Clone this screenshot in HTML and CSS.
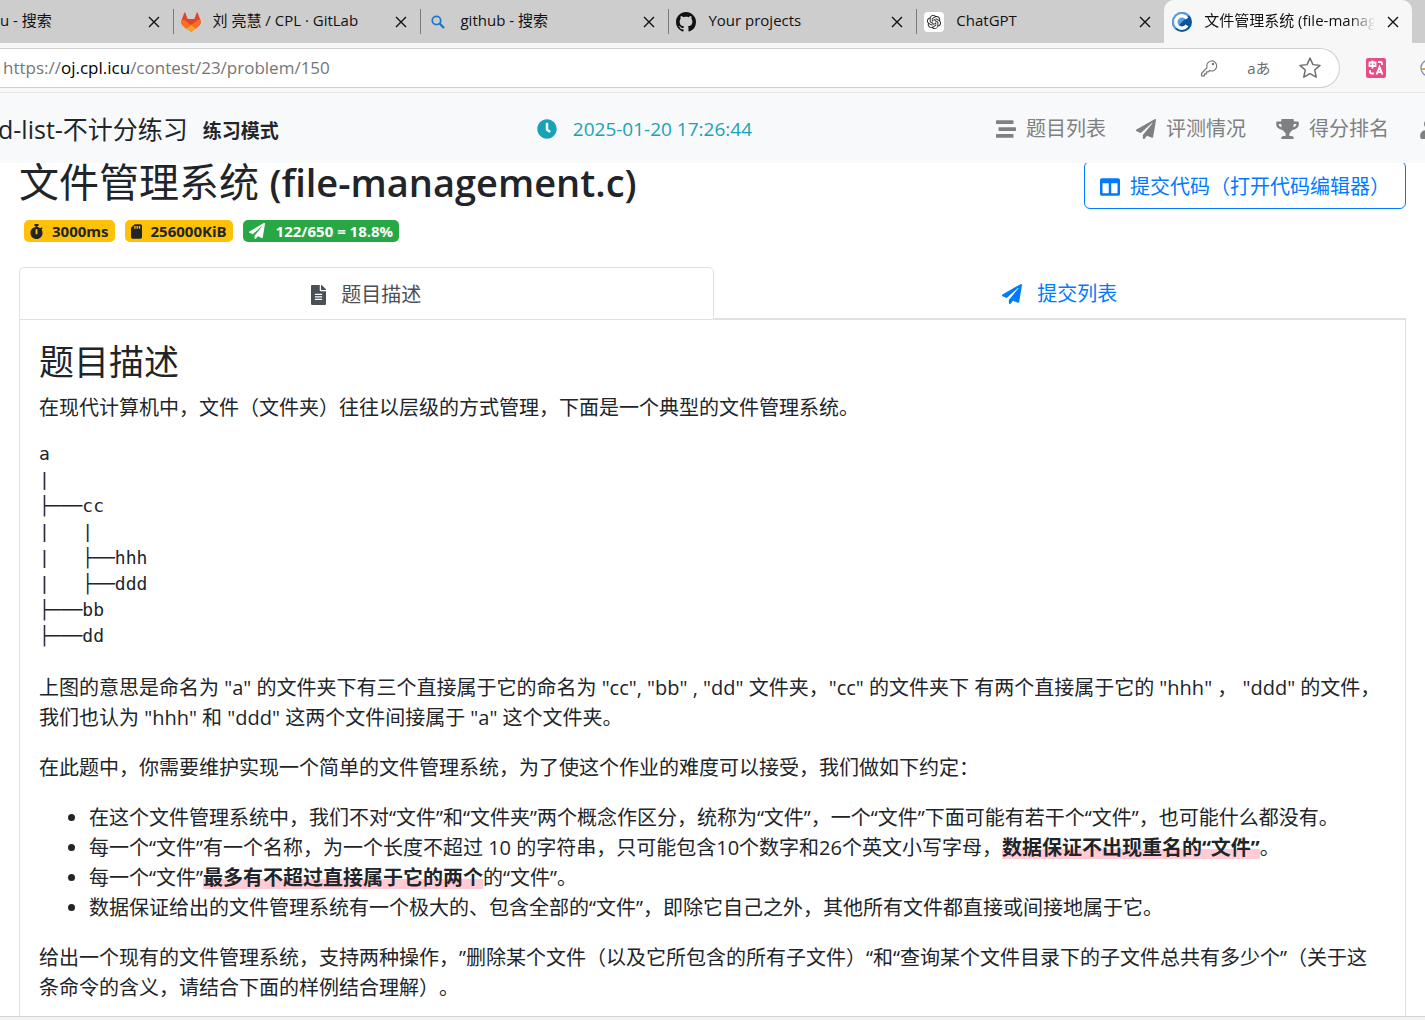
FILE: index.html
```html
<!DOCTYPE html>
<html lang="zh-CN">
<head>
<meta charset="utf-8">
<title>文件管理系统 (file-management.c)</title>
<link rel="stylesheet" href="styles.css">
</head>
<body>
<svg class="sprite" aria-hidden="true">
  <symbol id="close" viewBox="0 0 12 12"><path d="M1 1l10 10M11 1L1 11" stroke="currentColor" stroke-width="1.4" fill="none"/></symbol>
  <symbol id="plane" viewBox="0 0 512 512"><path d="M476 3.2L12.5 270.6c-18.1 10.4-15.8 35.6 2.2 43.2L121 358.4l287.3-253.2c5.5-4.9 13.3 2.6 8.6 8.3L176 407v80.5c0 23.6 28.5 32.9 42.5 15.8L282 426l124.6 52.2c14.2 6 30.4-2.9 33-18.2l72-432C515 7.8 493.3-6.8 476 3.2z"/></symbol>
</svg>

<div class="tabs">
  <div class="tab first"><span class="tab-title">u - 搜索</span><button class="close" aria-label="关闭"><svg><use href="#close"/></svg></button></div>
  <div class="tab">
    <svg class="favicon" viewBox="0 0 20 20"><path d="M3.2 1 .8 7.6C-.2 10 .3 12.300 2 13.800L10 19.700l8-5.900c1.700-1.500 2.200-3.800 1.200-6.200L16.800 1c-.3-.6-1-.6-1.200 0L13.300 7H6.700L4.400 1c-.2-.6-.9-.6-1.200 0z" fill="#e24329"/><path d="M19.200 7.600c-2 .3-3.500 1.200-5 2.300L10 13l5 3.900 3-3.100c1.700-1.500 2.200-3.800 1.200-6.200zM.8 7.600c2 .3 3.500 1.200 5 2.300L10 13l-5 3.900-3-3.100C.3 12.300-.2 10 .8 7.600z" fill="#fc6d26"/><path d="m10 13 4.500 3.400L10 19.700l-4.500-3.300z" fill="#fca326"/></svg>
    <span class="tab-title">刘 亮慧 / CPL · GitLab</span><button class="close" aria-label="关闭"><svg><use href="#close"/></svg></button></div>
  <div class="tab">
    <svg class="favicon" viewBox="0 0 20 20"><circle cx="8.500" cy="8.500" r="4.200" fill="none" stroke="#1a78d0" stroke-width="1.800"/><path d="m11.700 11.700 4.300 4.300" stroke="#1a78d0" stroke-width="2.400"/></svg>
    <span class="tab-title">github - 搜索</span><button class="close" aria-label="关闭"><svg><use href="#close"/></svg></button></div>
  <div class="tab">
    <svg class="favicon" viewBox="0 0 16 16" fill="#24292f"><path d="M8 0C3.580 0 0 3.580 0 8c0 3.540 2.290 6.530 5.470 7.590.4.070.55-.17.55-.38 0-.19-.01-.82-.01-1.490-2.010.37-2.530-.49-2.690-.94-.09-.23-.48-.94-.82-1.130-.28-.15-.68-.52-.01-.53.63-.01 1.080.58 1.230.82.72 1.210 1.870.87 2.330.66.070-.52.28-.87.51-1.070-1.780-.2-3.640-.89-3.640-3.950 0-.87.31-1.590.82-2.150-.08-.2-.36-1.020.08-2.120 0 0 .67-.21 2.200.82.64-.18 1.320-.27 2-.27s1.360.09 2 .27c1.530-1.040 2.200-.82 2.200-.82.44 1.100.16 1.920.08 2.120.51.56.82 1.270.82 2.150 0 3.070-1.870 3.750-3.650 3.950.29.25.54.73.54 1.480 0 1.070-.01 1.930-.01 2.200 0 .21.15.46.55.38A8.010 8.010 0 0 0 16 8c0-4.420-3.580-8-8-8z"/></svg>
    <span class="tab-title">Your projects</span><button class="close" aria-label="关闭"><svg><use href="#close"/></svg></button></div>
  <div class="tab">
    <svg class="favicon" viewBox="0 0 34 34"><rect width="34" height="34" rx="7" fill="#fff"/><path transform="translate(5 5)" fill="#222" d="M22.282 9.821a5.985 5.985 0 0 0-.516-4.910 6.046 6.046 0 0 0-6.510-2.900A6.065 6.065 0 0 0 4.981 4.182a5.985 5.985 0 0 0-3.998 2.900 6.046 6.046 0 0 0 .743 7.097 5.980 5.980 0 0 0 .51 4.911 6.051 6.051 0 0 0 6.515 2.900A5.985 5.985 0 0 0 13.260 24a6.056 6.056 0 0 0 5.772-4.206 5.990 5.990 0 0 0 3.998-2.900 6.056 6.056 0 0 0-.748-7.073zM13.260 22.430a4.476 4.476 0 0 1-2.876-1.040l.141-.081 4.779-2.758a.795.795 0 0 0 .392-.681v-6.737l2.020 1.168a.071.071 0 0 1 .038.052v5.583a4.504 4.504 0 0 1-4.494 4.494zM3.600 18.304a4.470 4.470 0 0 1-.535-3.014l.142.085 4.783 2.759a.771.771 0 0 0 .780 0l5.843-3.369v2.332a.080.080 0 0 1-.033.062L9.740 19.950a4.500 4.500 0 0 1-6.140-1.646zM2.341 7.896a4.485 4.485 0 0 1 2.365-1.973V11.600a.766.766 0 0 0 .388.677l5.815 3.354-2.020 1.169a.076.076 0 0 1-.071 0l-4.830-2.787A4.504 4.504 0 0 1 2.341 7.872zm16.597 3.855-5.833-3.387L15.119 7.200a.076.076 0 0 1 .071 0l4.830 2.791a4.494 4.494 0 0 1-.676 8.105v-5.678a.790.790 0 0 0-.407-.667zm2.010-3.023-.141-.085-4.774-2.782a.776.776 0 0 0-.785 0L9.409 9.230V6.897a.066.066 0 0 1 .028-.061l4.830-2.787a4.499 4.499 0 0 1 6.680 4.660zM8.307 12.863l-2.020-1.164a.080.080 0 0 1-.038-.057V6.074a4.499 4.499 0 0 1 7.376-3.453l-.142.080L8.704 5.460a.795.795 0 0 0-.393.681zm1.097-2.365 2.602-1.500 2.607 1.500v2.999l-2.597 1.500-2.607-1.500z"/></svg>
    <span class="tab-title">ChatGPT</span><button class="close" aria-label="关闭"><svg><use href="#close"/></svg></button></div>
  <div class="tab active">
    <svg class="favicon" viewBox="0 0 20 20"><circle cx="10" cy="10" r="10" fill="#0b559f"/><path d="M2.900 17.100A10 10 0 0 1 17.100 2.900z" fill="#5c9fdc"/><path d="M15 6.400a6.200 6.200 0 1 0 0 7.200" fill="none" stroke="#fff" stroke-width="3.400"/></svg>
    <span class="tab-title">文件管理系统 (file-management.c)</span><button class="close" aria-label="关闭"><svg><use href="#close"/></svg></button></div>
  <div class="tab-rest"></div>
</div>

<div class="toolbar">
  <div class="address">
    <div class="url">https://<b>oj.cpl.icu</b>/contest/23/problem/150</div>
    <svg class="tool" viewBox="0 0 20 20"><path d="M2.500 15.500v2.300h3v-1.900h2v-2h1.800l1.300-1.400A5 5 0 1 0 8 9.600z" fill="none" stroke="#767676" stroke-width="1.200" stroke-linejoin="round"/><circle cx="14" cy="6" r="1.200" fill="#767676"/></svg>
    <button class="reader" aria-label="翻译">aあ</button>
    <svg class="tool" viewBox="0 0 20 20"><path d="m10 1 2.700 5.900 6.400.7-4.800 4.300 1.400 6.400L10 15.100l-5.700 3.200 1.400-6.400L.9 7.600l6.400-.7z" fill="none" stroke="#6b6b6b" stroke-width="1.300" stroke-linejoin="round"/></svg>
  </div>
  <svg class="ext" viewBox="0 0 20 20"><rect width="20" height="20" rx="2" fill="#ea4c89"/><path d="M3.500 4.500h6v3.500h-6zM6.500 2.500v8M12 4h2.500q1.500 0 1.500 1.500V7M4 12v2q0 1.500 1.500 1.500H8M10.500 16.500 13.500 9l3 7.500M11.500 14.200h4" fill="none" stroke="#fff" stroke-width="1.800"/></svg>
  <svg class="ext last" viewBox="0 0 20 20"><circle cx="9" cy="10" r="8" fill="#fff" stroke="#8097b5" stroke-width="1.500"/><path d="M2 11h6" stroke="#e8a33d" stroke-width="2"/></svg>
</div>

<div class="page">
  <nav class="navbar">
    <div class="brand"><span class="contest">d-list-不计分练习</span><strong>练习模式</strong></div>
    <div class="clock"><svg viewBox="0 0 512 512"><path d="M256 8C119 8 8 119 8 256s111 248 248 248 248-111 248-248S393 8 256 8zm92.490 313-20 25a16 16 0 0 1-22.490 2.500l-67-49.720a40 40 0 0 1-15-31.230V112a16 16 0 0 1 16-16h32a16 16 0 0 1 16 16v144l58 42.500a16 16 0 0 1 2.490 22.500z"/></svg><time>2025-01-20 17:26:44</time></div>
    <div class="links">
      <a href="#list"><svg viewBox="0 0 512 512"><path d="M16 128h416c8.840 0 16-7.160 16-16V48c0-8.840-7.160-16-16-16H16C7.160 32 0 39.160 0 48v64c0 8.840 7.160 16 16 16zm480 80H80c-8.840 0-16 7.160-16 16v64c0 8.840 7.160 16 16 16h416c8.840 0 16-7.160 16-16v-64c0-8.840-7.160-16-16-16zm-64 176H16c-8.840 0-16 7.160-16 16v64c0 8.840 7.160 16 16 16h416c8.840 0 16-7.160 16-16v-64c0-8.840-7.160-16-16-16z"/></svg>题目列表</a>
      <a href="#status"><svg><use href="#plane"/></svg>评测情况</a>
      <a href="#rank"><svg class="wide" viewBox="0 0 576 512"><path d="M552 64H448V24c0-13.300-10.700-24-24-24H152c-13.300 0-24 10.700-24 24v40H24C10.700 64 0 74.700 0 88v56c0 35.700 22.500 72.400 61.900 100.700 31.500 22.700 69.800 37.100 110 41.700C203.300 338.500 240 360 240 360v72h-48c-35.300 0-64 20.700-64 56v12c0 6.600 5.400 12 12 12h296c6.600 0 12-5.400 12-12v-12c0-35.300-28.700-56-64-56h-48v-72s36.700-21.500 68.100-73.600c40.300-4.600 78.600-19 110-41.700 39.300-28.300 61.900-65 61.900-100.700V88c0-13.300-10.700-24-24-24zM99.300 192.800C74.900 175.200 64 155.600 64 144v-16h64.200c1 32.600 5.800 61.200 12.800 86.200-15.100-5.200-29.200-12.400-41.700-21.400zM512 144c0 16.100-17.700 36.100-35.300 48.800-12.500 9-26.700 16.200-41.800 21.400 7-25 11.800-53.600 12.800-86.200H512v16z"/></svg>得分排名</a>
      <a href="#user" aria-label="用户"><svg viewBox="0 0 448 512"><path d="M224 256c70.700 0 128-57.300 128-128S294.700 0 224 0 96 57.300 96 128s57.300 128 128 128zm89.600 32h-16.700c-22.200 10.200-46.900 16-72.900 16s-50.600-5.800-72.900-16h-16.700C60.200 288 0 348.200 0 422.400V464c0 26.500 21.500 48 48 48h352c26.500 0 48-21.500 48-48v-41.600c0-74.200-60.200-134.400-134.400-134.400z"/></svg></a>
    </div>
  </nav>

  <main class="viewport"><div class="problem">
    <header class="head">
      <div>
        <h1>文件管理系统 <span>(file-management.c)</span></h1>
        <div class="badges">
          <span class="badge warn"><svg class="watch" viewBox="0 0 448 512"><path d="M432 304c0 114.900-93.100 208-208 208S16 418.900 16 304c0-104 76.300-190.200 176-205.500V64h-28c-6.600 0-12-5.400-12-12V12c0-6.600 5.400-12 12-12h120c6.600 0 12 5.400 12 12v40c0 6.600-5.400 12-12 12h-28v34.500c37.500 5.800 71.700 21.600 99.700 44.600l27.500-27.500c4.700-4.700 12.300-4.700 17 0l28.300 28.300c4.700 4.700 4.700 12.300 0 17l-30 30C419.700 223.300 432 262.200 432 304zm-176 36V188.500c0-6.600-5.400-12-12-12h-40c-6.600 0-12 5.400-12 12V340c0 6.600 5.400 12 12 12h40c6.600 0 12-5.400 12-12z"/></svg>3000ms</span>
          <span class="badge warn"><svg class="card-icon" viewBox="0 0 384 512"><path d="M320 0H128L0 128v320c0 35.300 28.700 64 64 64h256c35.300 0 64-28.700 64-64V64c0-35.300-28.700-64-64-64zM160 160h-48V64h48v96zm80 0h-48V64h48v96zm80 0h-48V64h48v96z"/></svg>256000KiB</span>
          <span class="badge ok"><svg><use href="#plane"/></svg>122/650 = 18.8%</span>
        </div>
      </div>
      <button class="submit"><svg viewBox="0 0 512 512"><path d="M464 32H48C21.490 32 0 53.490 0 80v352c0 26.510 21.490 48 48 48h416c26.510 0 48-21.490 48-48V80c0-26.510-21.490-48-48-48zM224 416H64V160h160v256zm224 0H288V160h160v256z"/></svg>提交代码（打开代码编辑器）</button>
    </header>

    <div class="switch">
      <a class="current" href="#desc"><svg class="narrow" viewBox="0 0 384 512"><path d="M224 136V0H24C10.700 0 0 10.700 0 24v464c0 13.300 10.700 24 24 24h336c13.300 0 24-10.700 24-24V160H248c-13.200 0-24-10.800-24-24zm64 236c0 6.600-5.400 12-12 12H108c-6.600 0-12-5.400-12-12v-8c0-6.600 5.400-12 12-12h168c6.600 0 12 5.400 12 12v8zm0-64c0 6.600-5.400 12-12 12H108c-6.600 0-12-5.400-12-12v-8c0-6.600 5.400-12 12-12h168c6.600 0 12 5.400 12 12v8zm0-72v8c0 6.600-5.400 12-12 12H108c-6.600 0-12-5.400-12-12v-8c0-6.600 5.400-12 12-12h168c6.600 0 12 5.400 12 12zm96-114.100v6.100H256V0h6.100c6.400 0 12.500 2.500 17 7l97.900 98c4.500 4.500 7 10.600 7 16.900z"/></svg>题目描述</a>
      <a href="#submissions"><svg><use href="#plane"/></svg>提交列表</a>
    </div>

    <article class="card">
      <h2>题目描述</h2>
      <p>在现代计算机中，文件（文件夹）往往以层级的方式管理，下面是一个典型的文件管理系统。</p>
<pre>a
|
├───cc
|   |
|   ├──hhh
|   ├──ddd
├───bb
├───dd</pre>
      <p>上图的意思是命名为 "a" 的文件夹下有三个直接属于它的命名为 "cc", "bb" , "dd" 文件夹，"cc" 的文件夹下 有两个直接属于它的 "hhh" ， "ddd" 的文件，我们也认为 "hhh" 和 "ddd" 这两个文件间接属于 "a" 这个文件夹。</p>
      <p>在此题中，你需要维护实现一个简单的文件管理系统，为了使这个作业的难度可以接受，我们做如下约定：</p>
      <ul>
        <li>在这个文件管理系统中，我们不对“文件”和“文件夹”两个概念作区分，统称为“文件”，一个“文件”下面可能有若干个“文件”，也可能什么都没有。</li>
        <li>每一个“文件”有一个名称，为一个长度不超过 10 的字符串，只可能包含10个数字和26个英文小写字母，<strong>数据保证不出现重名的“文件”</strong>。</li>
        <li>每一个“文件”<strong>最多有不超过直接属于它的两个</strong>的“文件”。</li>
        <li>数据保证给出的文件管理系统有一个极大的、包含全部的“文件”，即除它自己之外，其他所有文件都直接或间接地属于它。</li>
      </ul>
      <p>给出一个现有的文件管理系统，支持两种操作，”删除某个文件（以及它所包含的所有子文件）“和“查询某个文件目录下的子文件总共有多少个”（关于这条命令的含义，请结合下面的样例结合理解）。</p>
    </article>
  </div></main>
</div>
<footer class="frame"></footer>
</body>
</html>
```
FILE: styles.css
```css
* { box-sizing: border-box; }
body {
  margin: 0;
  height: 100vh;
  display: flex;
  flex-direction: column;
  overflow: hidden;
  background: #fff;
  color: #212529;
  font: 20px/30px "Open Sans", "Noto Sans CJK SC", sans-serif;
  text-spacing-trim: space-all;
}
button { font: inherit; color: inherit; background: none; border: 0; padding: 0; }
svg { fill: currentColor; flex: none; }
a { color: inherit; text-decoration: none; }
.sprite { display: none; }

/* browser tabs */
.tabs { display: flex; height: 43px; flex: none; background: #f7f7f7; color: #111; font-size: 15px; line-height: 20px; }
.tab {
  flex: 495 1 0;
  min-width: 0;
  display: flex;
  align-items: center;
  gap: 12px;
  padding: 0 13px 0 8px;
  background: #cdcdcd;
  background-image: linear-gradient(#7a7a7a, #7a7a7a);
  background-size: 1px 25px;
  background-position: 0 9px;
  background-repeat: no-repeat;
}
.tab.first { flex-grow: 348; padding-left: 0; background-image: none; }
.tab:nth-child(5) { border-bottom-right-radius: 10px; }
.tab.active { background: #f7f7f7; border-radius: 10px 10px 0 0; box-shadow: 0 -10px 0 10px #cdcdcd; }
.tab-rest { flex: 28 1 0; background: #cdcdcd; border-bottom-left-radius: 10px; }
.favicon { width: 20px; height: 20px; }
.tab-title { flex: 1; overflow: hidden; white-space: nowrap; padding-bottom: 3px; }
.active .tab-title { mask-image: linear-gradient(to right, #000 85%, transparent); }
.close { width: 12px; height: 12px; }
.close svg { display: block; width: 12px; height: 12px; }

/* address bar */
.toolbar { display: flex; align-items: center; gap: 26px; height: 50px; flex: none; background: #f7f7f7; border-bottom: 1px solid #e8e8e8; overflow: hidden; }
.address {
  flex: none;
  width: 94%;
  height: 40px;
  display: flex;
  align-items: center;
  gap: 28px;
  padding: 0 18px 0 3px;
  background: #fff;
  border: 1px solid #cfcfcf;
  border-left: 0;
  border-radius: 0 20px 20px 0;
}
.url { flex: 1; font-size: 17px; color: #767676; }
.url b { font-weight: 400; color: #000; }
.ext { width: 20px; height: 20px; }
.ext.last { margin-left: 8px; }
.tool { width: 22px; height: 22px; }
.tool:first-of-type { width: 20px; height: 20px; }
.reader { font-size: 15px; color: #6b6b6b; }

/* contest navigation */
.page { flex: 1; min-height: 0; display: flex; flex-direction: column; }
.navbar { height: 70px; flex: none; display: flex; align-items: center; padding-top: 2px; background: #f8f9fa; white-space: nowrap; overflow: hidden; }
.brand { display: flex; align-items: center; gap: 15px; margin-left: -2px; padding-right: 14px; }
.contest { font-size: 25px; }
.brand strong { font-size: 19px; padding-top: 4px; }
.clock { display: flex; align-items: center; gap: 16px; margin: 0 auto; color: #17a2b8; }
.clock time { font-size: 19px; }
.clock svg, .links svg, .switch svg, .submit svg { width: 20px; height: 20px; }
.links { display: flex; gap: 30px; margin-right: -14px; color: #7f8080; }
.links a { display: flex; align-items: center; gap: 10px; }
.links .wide { width: 23px; }

/* problem */
.viewport { flex: 1; min-height: 0; overflow: hidden; }
.problem { margin: -2px 19px 0; }
.head { display: flex; justify-content: space-between; align-items: flex-start; padding-bottom: 25px; }
h1 { margin: 0; font-size: 40px; line-height: 42px; font-weight: 400; }
h1 span { font-size: 38px; font-weight: 600; }
.badges { display: flex; gap: 10px; padding: 17px 5px 0; }
.badge { display: flex; align-items: center; gap: 9px; padding: 0 6px; border-radius: 5px; font-size: 15px; line-height: 22px; font-weight: 700; }
.badge svg { width: 16px; height: 16px; }
.badge .watch { width: 13px; height: 15px; }
.badge .card-icon { width: 11px; height: 15px; }
.warn { background: #ffc107; }
.ok { gap: 11px; background: #28a745; color: #fff; }
.submit { display: flex; align-items: center; gap: 10px; padding: 10px 15px 6px; border: 1px solid #007bff; border-radius: 6px; color: #007bff; }
.switch { display: flex; }
.switch a { flex: 1 1 0; display: flex; justify-content: center; align-items: center; gap: 15px; padding: 12px 0 9px; border-bottom: 2px solid #dee2e6; color: #007bff; }
.switch .current { color: #495057; border: 1px solid #dee2e6; border-radius: 5px 5px 0 0; }
.switch .narrow { width: 15px; }
.card { border: solid #dee2e6; border-width: 0 1px; padding: 21px 19px 20px; }
h2 { margin: 0 0 10px; font-size: 35px; line-height: 42px; font-weight: 400; }
p, ul { margin: 0 0 20px; }
ul { padding-left: 50px; }
pre { margin: -2px 0 24px; font: 18px/26px "DejaVu Sans Mono", monospace; }
li strong { background: linear-gradient(transparent 55%, #ffccd5 55%, #ffccd5 93%, transparent 93%); }
.frame { flex: none; height: 4px; background: #f3f3f3; border-top: 1px solid #d5d5d5; }
```
